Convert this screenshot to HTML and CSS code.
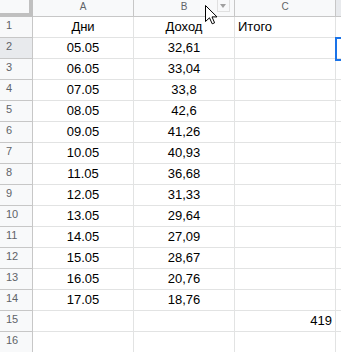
FILE: index.html
```html
<!DOCTYPE html>
<html lang="ru">
<head>
  <meta charset="UTF-8">
  <title>Таблица</title>
  <link rel="stylesheet" href="styles.css">
</head>
<body>
<div class="sheet">
  <div class="grid">
    <div class="corner"></div>
    <div class="col-head">A</div>
    <div class="col-head col-b">B<span class="filter-btn"></span></div>
    <div class="col-head">C</div>
    <div class="col-head active"></div>

    <div class="row-head">1</div>
    <div class="cell center">Дни</div>
    <div class="cell center">Доход</div>
    <div class="cell">Итого</div>
    <div class="cell"></div>

    <div class="row-head active">2</div>
    <div class="cell center">05.05</div>
    <div class="cell center">32,61</div>
    <div class="cell"></div>
    <div class="cell"></div>

    <div class="row-head">3</div>
    <div class="cell center">06.05</div>
    <div class="cell center">33,04</div>
    <div class="cell"></div>
    <div class="cell"></div>

    <div class="row-head">4</div>
    <div class="cell center">07.05</div>
    <div class="cell center">33,8</div>
    <div class="cell"></div>
    <div class="cell"></div>

    <div class="row-head">5</div>
    <div class="cell center">08.05</div>
    <div class="cell center">42,6</div>
    <div class="cell"></div>
    <div class="cell"></div>

    <div class="row-head">6</div>
    <div class="cell center">09.05</div>
    <div class="cell center">41,26</div>
    <div class="cell"></div>
    <div class="cell"></div>

    <div class="row-head">7</div>
    <div class="cell center">10.05</div>
    <div class="cell center">40,93</div>
    <div class="cell"></div>
    <div class="cell"></div>

    <div class="row-head">8</div>
    <div class="cell center">11.05</div>
    <div class="cell center">36,68</div>
    <div class="cell"></div>
    <div class="cell"></div>

    <div class="row-head">9</div>
    <div class="cell center">12.05</div>
    <div class="cell center">31,33</div>
    <div class="cell"></div>
    <div class="cell"></div>

    <div class="row-head">10</div>
    <div class="cell center">13.05</div>
    <div class="cell center">29,64</div>
    <div class="cell"></div>
    <div class="cell"></div>

    <div class="row-head">11</div>
    <div class="cell center">14.05</div>
    <div class="cell center">27,09</div>
    <div class="cell"></div>
    <div class="cell"></div>

    <div class="row-head">12</div>
    <div class="cell center">15.05</div>
    <div class="cell center">28,67</div>
    <div class="cell"></div>
    <div class="cell"></div>

    <div class="row-head">13</div>
    <div class="cell center">16.05</div>
    <div class="cell center">20,76</div>
    <div class="cell"></div>
    <div class="cell"></div>

    <div class="row-head">14</div>
    <div class="cell center">17.05</div>
    <div class="cell center">18,76</div>
    <div class="cell"></div>
    <div class="cell"></div>

    <div class="row-head">15</div>
    <div class="cell"></div>
    <div class="cell"></div>
    <div class="cell right">419</div>
    <div class="cell"></div>

    <div class="row-head">16</div>
    <div class="cell"></div>
    <div class="cell"></div>
    <div class="cell"></div>
    <div class="cell"></div>
  </div>

  <div class="selection"></div>

  <svg class="cursor" width="13" height="20" viewBox="0 0 13 20">
    <path d="M0.5 0.5 L0.5 16.5 L4.5 12.8 L7.2 18.8 L9.6 17.8 L7 11.9 L12 11.9 Z" fill="#fff" stroke="#000" stroke-width="1" stroke-linejoin="miter"/>
  </svg>
</div>
</body>
</html>
```

FILE: styles.css
```css
html, body { margin: 0; padding: 0; background: #fff; overflow: hidden; }
body { font-family: "Liberation Sans", Arial, sans-serif; }

.sheet { position: relative; width: 341px; height: 352px; overflow: hidden; }

.grid {
  display: grid;
  grid-template-columns: 33px 101px 101px 101px 60px;
  grid-template-rows: 17px repeat(16, 21px);
}

.corner {
  background: #f8f9fa;
  border-right: 4px solid #c0c0c0;
  border-bottom: 4px solid #c0c0c0;
}

.col-head {
  position: relative;
  background: #f8f9fa;
  border-right: 1px solid #c7c7c7;
  border-bottom: 1px solid #c7c7c7;
  color: #5f6368;
  font-size: 10px;
  line-height: 14px;
  text-align: center;
}
.col-head.active { background: #e8eaed; }

.filter-btn {
  position: absolute;
  top: 0;
  left: 83px;
  width: 11px;
  height: 11px;
  border: 1px solid #e0e0e0;
  border-top: none;
  background: #f8f9fa;
}
.filter-btn::after {
  content: "";
  position: absolute;
  left: 2px;
  top: 4px;
  border-left: 3.5px solid transparent;
  border-right: 3.5px solid transparent;
  border-top: 4px solid #a0a0a0;
}

.row-head {
  background: #f8f9fa;
  border-right: 1px solid #c7c7c7;
  border-bottom: 1px solid #c7c7c7;
  color: #5f6368;
  font-size: 11px;
  line-height: 17px;
  padding-left: 6px;
}
.row-head.active { background: #e8eaed; }

.cell {
  border-right: 1px solid #e2e3e3;
  border-bottom: 1px solid #e2e3e3;
  font-size: 13px;
  line-height: 20px;
  color: #000;
  padding: 0 3px;
  white-space: nowrap;
  overflow: hidden;
}
.cell.center { text-align: center; }
.cell.right { text-align: right; }

.selection {
  position: absolute;
  left: 335px;
  top: 37px;
  width: 40px;
  height: 20px;
  border: 2px solid #1a73e8;
}

.cursor { position: absolute; left: 205px; top: 5px; }
```
